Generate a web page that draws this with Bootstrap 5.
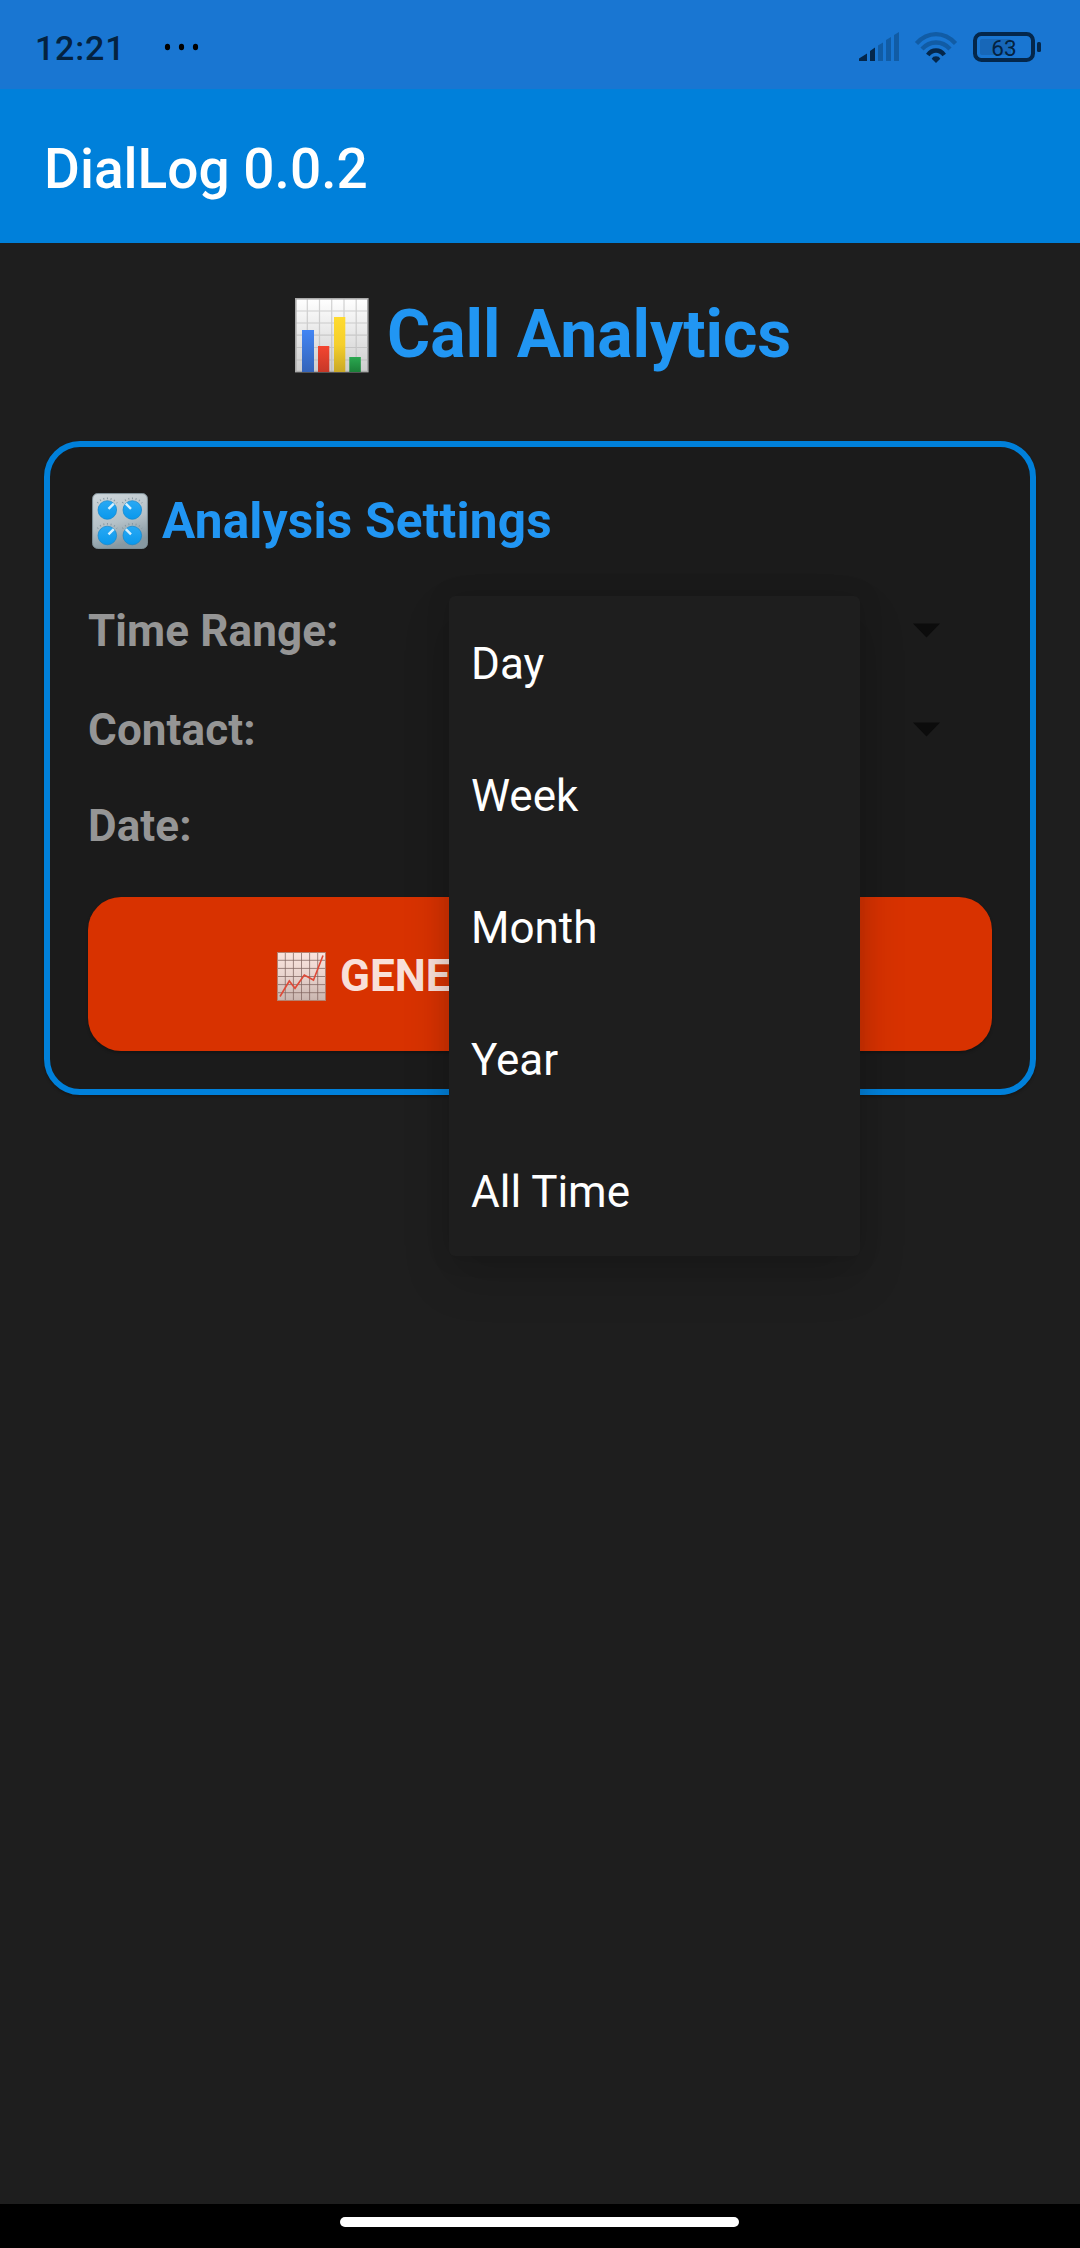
<!DOCTYPE html>
<html lang="en" data-bs-theme="dark">
<head>
<meta charset="utf-8">
<meta name="viewport" content="width=device-width, initial-scale=1">
<title>DialLog 0.0.2</title>
<link href="https://cdn.jsdelivr.net/npm/bootstrap@5.3.0/dist/css/bootstrap.min.css" rel="stylesheet">
<style>
  body { font-family: Roboto, "Noto Sans", sans-serif; background: #1e1e1e; height: 2248px; overflow: hidden; }
  svg { display: block; flex: none; }
  .status-bar { height: 89px; background: #1976d2; padding: 0 39px 0 35px; color: #04223f; }
  .clock { width: 125px; font-size: 34px; font-weight: 500; line-height: 40px; letter-spacing: .8px; padding-top: 28px; }
  .app-bar { height: 154px; background: #0080da; padding: 6px 44px 0; }
  .app-title { font-size: 55px; font-weight: 500; line-height: 72px; color: #fff; white-space: nowrap; }
  .accent { color: #2196f3; font-weight: 700; white-space: nowrap; }
  .page-heading { height: 198px; padding: 0 0 0 295px; }
  .page-heading h1 { font-size: 66px; line-height: 80px; margin: 52px 0 0 18px; }
  .page-heading svg { margin-top: 55px; }
  .settings-panel { margin: 0 44px; height: 654px; border: 6px solid #0080da; border-radius: 36px; background: #1b1b1b; padding: 38px; box-shadow: 0 2px 3px rgba(0,0,0,.25); }
  .settings-title { height: 116px; padding-left: 4px; }
  .settings-title h2 { font-size: 49.5px; line-height: 60px; letter-spacing: .22px; margin: 6px 0 0 14px; }
  .settings-title svg { margin-top: 8px; }
  .field-row { height: 99px; position: relative; }
  .field-contact { height: 96px; }
  .field-date { height: 101px; }
  .field-label { font-size: 44px; line-height: 60px; letter-spacing: .1px; font-weight: 700; color: #959595; white-space: nowrap; }
  .arrow { margin: 22px 52px 0 0; }
  .option-menu { position: absolute; left: 361px; top: -5px; width: 411px; background: #1e1e1e; border: 0; border-radius: 6px; padding: 0; z-index: 5; box-shadow: 0 22px 48px rgba(0,0,0,.16), 0 0 24px rgba(0,0,0,.12); display: block; }
  .option-menu .dropdown-item { height: 132px; line-height: 128px; padding: 4px 22px 0; font-size: 44px; color: #fff; }
  .generate { width: 904px; height: 154px; border: 0; border-radius: 33px; background: #d83200; color: #f9e0d9; font-size: 44px; line-height: 60px; font-weight: 700; padding: 0 0 0 189px; white-space: nowrap; text-align: left; box-shadow: 0 2px 3px rgba(0,0,0,.25); }
  .generate svg { margin-top: 5px; }
  .generate-text { padding: 4px 0 0 14px; }
  .nav-strip { height: 44px; background: #000; padding-top: 13px; }
  .home-pill { width: 399px; height: 10px; border-radius: 5px; background: #fff; margin-left: 340px; }
</style>
</head>
<body class="d-flex flex-column">

<header>
  <div class="status-bar d-flex justify-content-between">
    <div class="d-flex">
      <div class="clock">12:21</div>
      <svg width="40" height="89" viewBox="160 0 40 89" fill="#000"><ellipse cx="167.500" cy="47" rx="2.600" ry="3.200"/><ellipse cx="181.500" cy="47" rx="2.600" ry="3.200"/><ellipse cx="195.500" cy="47" rx="2.600" ry="3.200"/></svg>
    </div>
    <svg width="186" height="89" viewBox="855 0 186 89">
      <g fill="#04274b">
        <path d="M859 61v-2.500L867 53.500V61zM870 61V51l5-3.500V61z"/>
        <path d="M878 61V45.500l5-3V61zM886 61V40l5-3V61zM894 61V35l5-3V61z" fill="#115ca5"/>
        <path d="M936 63l-4.300-4.300q1-2.400 4.300-2.400t4.300 2.400z"/>
      </g>
      <g fill="none" stroke-width="4.300">
        <path d="M916.500 43.500Q925 34.200 936 34.200T955.500 43.500" stroke="#115ca5"/>
        <path d="M922 49Q928 42.500 936 42.500T950 49" stroke="#115ca5"/>
        <path d="M927.800 55Q931 50.500 936 50.500T944.200 55" stroke="#04274b"/>
      </g>
      <rect x="980" y="39" width="31" height="16" rx="2" fill="#1767b8"/>
      <rect x="975" y="34" width="58" height="26" rx="6.500" fill="none" stroke="#04274b" stroke-width="4"/>
      <rect x="1037" y="42" width="4" height="10" rx="1.500" fill="#04274b"/>
      <text x="1004" y="55.500" text-anchor="middle" font-family="Roboto, sans-serif" font-size="22.500" font-weight="400" fill="#04223f">63</text>
    </svg>
  </div>
  <nav class="app-bar d-flex align-items-center">
    <div class="app-title">DialLog 0.0.2</div>
  </nav>
</header>

<main class="flex-grow-1">
  <div class="page-heading d-flex">
    <svg width="74" height="75" viewBox="0 0 74 75">
      <defs>
        <linearGradient id="paper" x2="0" y2="1"><stop stop-color="#fff"/><stop offset="1" stop-color="#cdcdcd"/></linearGradient>
        <linearGradient id="barBlue" x2="0" y2="1"><stop stop-color="#4285f4"/><stop offset="1" stop-color="#3564b9"/></linearGradient>
        <linearGradient id="barRed" x2="0" y2="1"><stop stop-color="#f44631"/><stop offset="1" stop-color="#c63827"/></linearGradient>
        <linearGradient id="barYellow" x2="0" y2="1"><stop stop-color="#ffdb30"/><stop offset=".5" stop-color="#f5cf2c"/><stop offset="1" stop-color="#c9a827"/></linearGradient>
        <linearGradient id="barGreen" x2="0" y2="1"><stop stop-color="#2ba850"/><stop offset="1" stop-color="#1b7f38"/></linearGradient>
      </defs>
      <rect x=".8" y=".8" width="72" height="72.800" fill="url(#paper)" stroke="#aaa" stroke-width="1.600"/>
      <path d="M12.300 1v72M24.500 1v72M36.700 1v72M49 1v72M61.200 1v72M1 13h72M1 25h72M1 37.200h72M1 49.500h72M1 62h72" stroke="#b5b5b5" stroke-opacity=".6" stroke-width="1.200" fill="none"/>
      <rect x="7" y="32" width="12" height="42" fill="url(#barBlue)"/>
      <rect x="23" y="48" width="11.300" height="26" fill="url(#barRed)"/>
      <rect x="39" y="19" width="11.300" height="55" fill="url(#barYellow)"/>
      <rect x="54.300" y="59" width="11.500" height="15" fill="url(#barGreen)"/>
    </svg>
    <h1 class="accent">Call Analytics</h1>
  </div>

  <section class="settings-panel">
    <div class="settings-title d-flex">
      <svg width="56" height="56" viewBox="0 0 56 56">
        <defs>
          <linearGradient id="plate" x2=".3" y2="1"><stop stop-color="#cfd8dc"/><stop offset=".6" stop-color="#b5c1c7"/><stop offset="1" stop-color="#8799a2"/></linearGradient>
          <linearGradient id="knobFill" x2="0" y2="1"><stop stop-color="#29a9f4"/><stop offset="1" stop-color="#0a98ec"/></linearGradient>
        </defs>
        <rect x=".6" y=".6" width="54.800" height="54.800" rx="5" fill="url(#plate)" stroke="#82939b" stroke-width="1"/>
        <g fill="none" stroke="#8799a3" stroke-width="1.800" stroke-dasharray="1 2.600">
          <path d="M5.500 10A12.500 12.500 0 0 1 25 10M30.500 10A12.500 12.500 0 0 1 50 10M5.500 35.500A12.500 12.500 0 0 1 25 35.500M30.500 35.500A12.500 12.500 0 0 1 50 35.500"/>
        </g>
        <g fill="url(#knobFill)" stroke="#1387cc" stroke-width=".7">
          <circle cx="15.300" cy="17" r="9.300"/><circle cx="40.300" cy="17" r="9.300"/><circle cx="15.300" cy="42.500" r="9.300"/><circle cx="40.300" cy="42.500" r="9.300"/>
        </g>
        <path d="M16.500 15.800L21.800 10.600M39 15.800L33.800 10.600M16.500 41.300L21.800 36.100M39 41.300L33.800 36.100" stroke="#d6f1ff" stroke-width="2.400" fill="none"/>
      </svg>
      <h2 class="accent">Analysis Settings</h2>
    </div>

    <div class="field-row d-flex justify-content-between">
      <div class="field-label">Time Range:</div>
      <svg class="arrow" width="27" height="15" viewBox="0 0 27 15"><path d="M0 .5h27l-13.500 14z" fill="#0c0c0c"/></svg>
      <div class="option-menu dropdown-menu show">
        <a class="dropdown-item">Day</a>
        <a class="dropdown-item">Week</a>
        <a class="dropdown-item">Month</a>
        <a class="dropdown-item">Year</a>
        <a class="dropdown-item">All Time</a>
      </div>
    </div>
    <div class="field-contact d-flex justify-content-between">
      <div class="field-label">Contact:</div>
      <svg class="arrow" width="27" height="15" viewBox="0 0 27 15"><path d="M0 .5h27l-13.500 14z" fill="#0c0c0c"/></svg>
    </div>
    <div class="field-date">
      <div class="field-label">Date:</div>
    </div>

    <button class="generate btn d-flex align-items-center" type="button">
      <svg width="49" height="49" viewBox="0 0 49 49">
        <defs><linearGradient id="sheet" x2="0" y2="1"><stop stop-color="#fae4de"/><stop offset=".5" stop-color="#e8d3cd"/><stop offset="1" stop-color="#c9b5af"/></linearGradient></defs>
        <rect x=".5" y=".5" width="48" height="48" fill="url(#sheet)" stroke="#b5816f"/>
        <path d="M8.300 1v47M16.400 1v47M24.500 1v47M32.600 1v47M40.700 1v47M1 8.300h47M1 16.400h47M1 24.500h47M1 32.600h47M1 40.700h47" stroke="#806660" stroke-opacity=".75" stroke-width="1" fill="none"/>
        <path d="M3 44.500L12.300 29l5.700 7.300L27.300 23l9.200 5L46 3.500" fill="none" stroke="#df4a38" stroke-width="1.600"/>
      </svg>
      <span class="generate-text">GENERATE ANALYSIS</span>
    </button>
  </section>
</main>

<footer class="nav-strip"><div class="home-pill"></div></footer>

<script src="https://cdn.jsdelivr.net/npm/bootstrap@5.3.0/dist/js/bootstrap.bundle.min.js"></script>
</body>
</html>
